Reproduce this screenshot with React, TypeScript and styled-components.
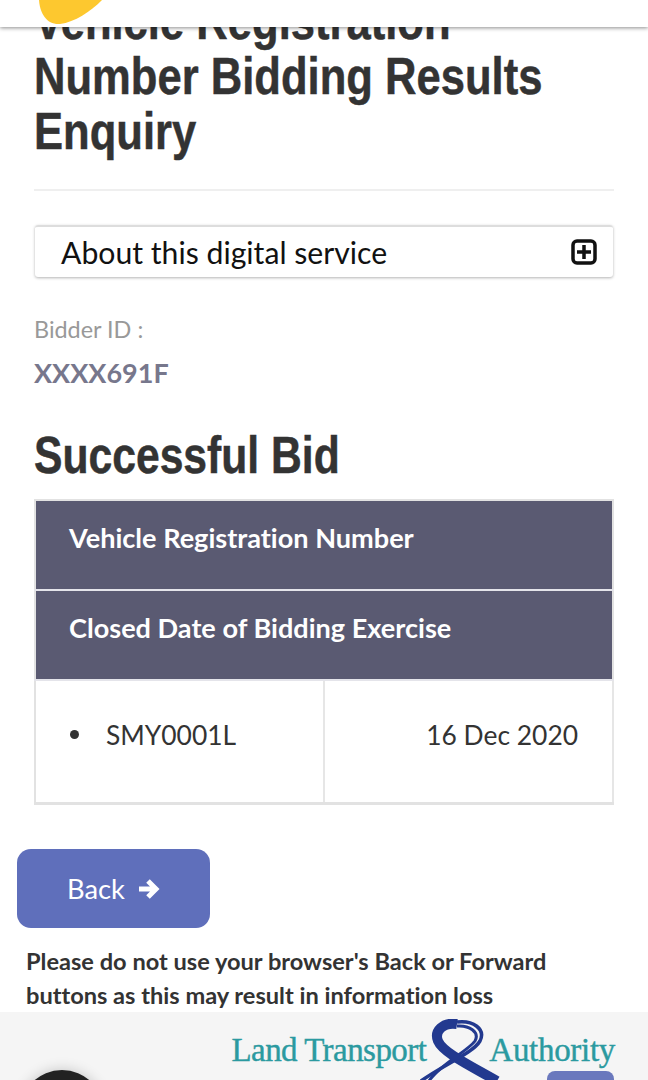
import React from "react";
import styled, { createGlobalStyle } from "styled-components";

const GlobalStyle = createGlobalStyle`
  html, body {
    margin: 0;
    padding: 0;
    background: #fff;
    font-family: Lato, "Liberation Sans", sans-serif;
    font-variant-ligatures: none;
  }
  * { box-sizing: border-box; }
`;

const Page = styled.div`
  position: relative;
  width: 648px;
  height: 1080px;
  overflow: hidden;
  background: #fff;
  display: flex;
  flex-direction: column;
`;

const TopBar = styled.div`
  position: absolute;
  top: 0;
  left: 0;
  right: 0;
  height: 27px;
  background: #fff;
  box-shadow: 0 1px 4px rgba(0, 0, 0, 0.45);
  overflow: hidden;
  z-index: 2;
`;

const LogoBlob = styled.svg`
  position: absolute;
  left: 30px;
  top: 0;
`;

const Main = styled.main`
  flex: 1;
  padding: 0 34px;
`;

const TitleBlock = styled.div`
  display: flow-root;
  height: 191px;
  border-bottom: 2px solid #efefef;
`;

// no condensed face is installed, so the bold sans is squeezed sideways
const Title = styled.h1`
  margin: -6px 0 0;
  font-family: "Liberation Sans", sans-serif;
  font-size: 52px;
  line-height: 55px;
  font-weight: 700;
  color: #333;
  white-space: nowrap;
  -webkit-text-stroke: 0.5px #333;
  transform: scaleX(0.838);
  transform-origin: left top;
`;

const Accordion = styled.div`
  margin: 34px 1px 0;
  height: 52px;
  padding: 0 16px 0 26px;
  display: flex;
  align-items: center;
  justify-content: space-between;
  border-radius: 3px;
  border-top: 2px solid #ddd;
  box-shadow: 0 1px 3px rgba(0, 0, 0, 0.3);
  font-size: 30.2px;
  color: #111;
`;

const Label = styled.div`
  margin-top: 38px;
  font-size: 23.4px;
  line-height: 28px;
  color: #999;
`;

const BidderId = styled.div`
  margin-top: 14px;
  font-size: 27px;
  line-height: 32px;
  font-weight: 700;
  color: #77778c;
`;

const SubTitle = styled.h2`
  margin: 36px 0 0;
  font-family: "Liberation Sans", sans-serif;
  font-size: 52px;
  line-height: 60px;
  font-weight: 700;
  color: #333;
  white-space: nowrap;
  -webkit-text-stroke: 0.5px #333;
  transform: scaleX(0.82);
  transform-origin: left top;
`;

const Table = styled.table`
  margin-top: 14px;
  width: 580px;
  height: 306px;
  border-collapse: collapse;
  table-layout: fixed;
  border: 2px solid #e2e2e2;
  border-bottom-width: 3px;
`;

const HeadCell = styled.th`
  height: 90px;
  padding: 0 33px 16px;
  background: #5a5a72;
  color: #fff;
  border-bottom: 2px solid #e4e4ea;
  font-size: 27.1px;
  font-weight: 700;
  text-align: left;
`;

const BodyCell = styled.td<{ $right?: boolean }>`
  padding: 0 34px 14px;
  border-right: 2px solid #e6e6e6;
  font-size: 26.4px;
  color: #333;
  text-align: ${(p) => (p.$right ? "right" : "left")};
`;

const Plate = styled.span`
  display: flex;
  align-items: center;
  gap: 27px;
`;

const Bullet = styled.i`
  width: 9px;
  height: 9px;
  border-radius: 50%;
  background: #333;
`;

const BackButton = styled.button`
  margin: 44px 0 0 17px;
  width: 193px;
  height: 79px;
  border: 0;
  border-radius: 14px;
  background: #5f6fbb;
  color: #fff;
  font-family: inherit;
  font-size: 27.3px;
  display: flex;
  align-items: center;
  justify-content: center;
  gap: 13px;
  padding: 0;
  align-self: flex-start;
`;

const Note = styled.p`
  margin: 16px 30px 0 26px;
  font-size: 23.6px;
  line-height: 34px;
  font-weight: 700;
  color: #333;
`;

const Footer = styled.footer`
  position: relative;
  height: 68px;
  background: #f5f5f5;
  overflow: hidden;
  display: flex;
  justify-content: flex-end;
  padding: 18px 33px 0 0;
`;

const Brand = styled.div`
  display: flex;
  align-items: flex-start;
  font-family: "Liberation Serif", serif;
  font-size: 33px;
  line-height: 40px;
  color: #2b9aa0;
  -webkit-text-stroke: 0.4px #2b9aa0;
`;

const BrandText = styled.span<{ $spacing: number }>`
  display: inline-block;
  letter-spacing: ${(p) => p.$spacing}px;
`;

const Ribbon = styled.svg`
  margin: -11px -12px 0 -9px;
  flex: none;
`;

const ChatBubble = styled.div`
  position: absolute;
  left: 20px;
  top: 58px;
  width: 84px;
  height: 84px;
  border-radius: 50%;
  background: #222;
  box-shadow: 0 0 14px rgba(0, 0, 0, 0.2);
`;

const ScrollTop = styled.div`
  position: absolute;
  left: 547px;
  top: 59px;
  width: 67px;
  height: 40px;
  border-radius: 8px;
  background: #6a78bd;
`;

export default function App() {
  return (
    <Page>
      <GlobalStyle />
      <TopBar>
        <LogoBlob width="80" height="27" viewBox="0 0 80 27">
          <path d="M9 0 C10 14 17 25 30 24 C45 22 60 12 72 0 Z" fill="#fdc82f" />
        </LogoBlob>
      </TopBar>
      <Main>
        <TitleBlock>
          <Title>
            Vehicle Registration
            <br />
            Number Bidding Results
            <br />
            Enquiry
          </Title>
        </TitleBlock>
        <Accordion>
          About this digital service
          <svg width="26" height="26" viewBox="0 0 26 26">
            <rect x="2" y="2" width="22" height="22" rx="4" fill="none" stroke="#111" strokeWidth="3.5" />
            <path d="M13 6v14M6 13h14" stroke="#111" strokeWidth="3.5" />
          </svg>
        </Accordion>
        <Label>Bidder ID :</Label>
        <BidderId>XXXX691F</BidderId>
        <SubTitle>Successful Bid</SubTitle>
        <Table>
          <thead>
            <tr>
              <HeadCell colSpan={2}>Vehicle Registration Number</HeadCell>
            </tr>
            <tr>
              <HeadCell colSpan={2}>Closed Date of Bidding Exercise</HeadCell>
            </tr>
          </thead>
          <tbody>
            <tr>
              <BodyCell>
                <Plate>
                  <Bullet />
                  SMY0001L
                </Plate>
              </BodyCell>
              <BodyCell $right>16 Dec 2020</BodyCell>
            </tr>
          </tbody>
        </Table>
      </Main>
      <BackButton>
        Back
        <svg width="22" height="22" viewBox="0 0 22 22">
          <path d="M1 11h16M10 3l8 8-8 8" fill="none" stroke="#fff" strokeWidth="5" />
        </svg>
      </BackButton>
      <Note>Please do not use your browser's Back or Forward buttons as this may result in information loss</Note>
      <Footer>
        <Brand>
          <BrandText $spacing={-0.55}>Land Transport</BrandText>
          <Ribbon width="84" height="62" viewBox="0 0 84 62">
            <path d="M40 5 C26 3 17 12 21 22 C26 34 56 48 80 62" fill="none" stroke="#22398f" strokeWidth="10" />
            <path d="M40 3 C56 1 69 10 63 22 C56 34 26 46 4 62" fill="none" stroke="#22398f" strokeWidth="3.5" />
            <path d="M40 7 C52 6 63 13 58 22 C51 32 22 46 12 62" fill="none" stroke="#22398f" strokeWidth="3" />
          </Ribbon>
          <BrandText $spacing={-0.3}>Authority</BrandText>
        </Brand>
        <ChatBubble />
        <ScrollTop />
      </Footer>
    </Page>
  );
}
